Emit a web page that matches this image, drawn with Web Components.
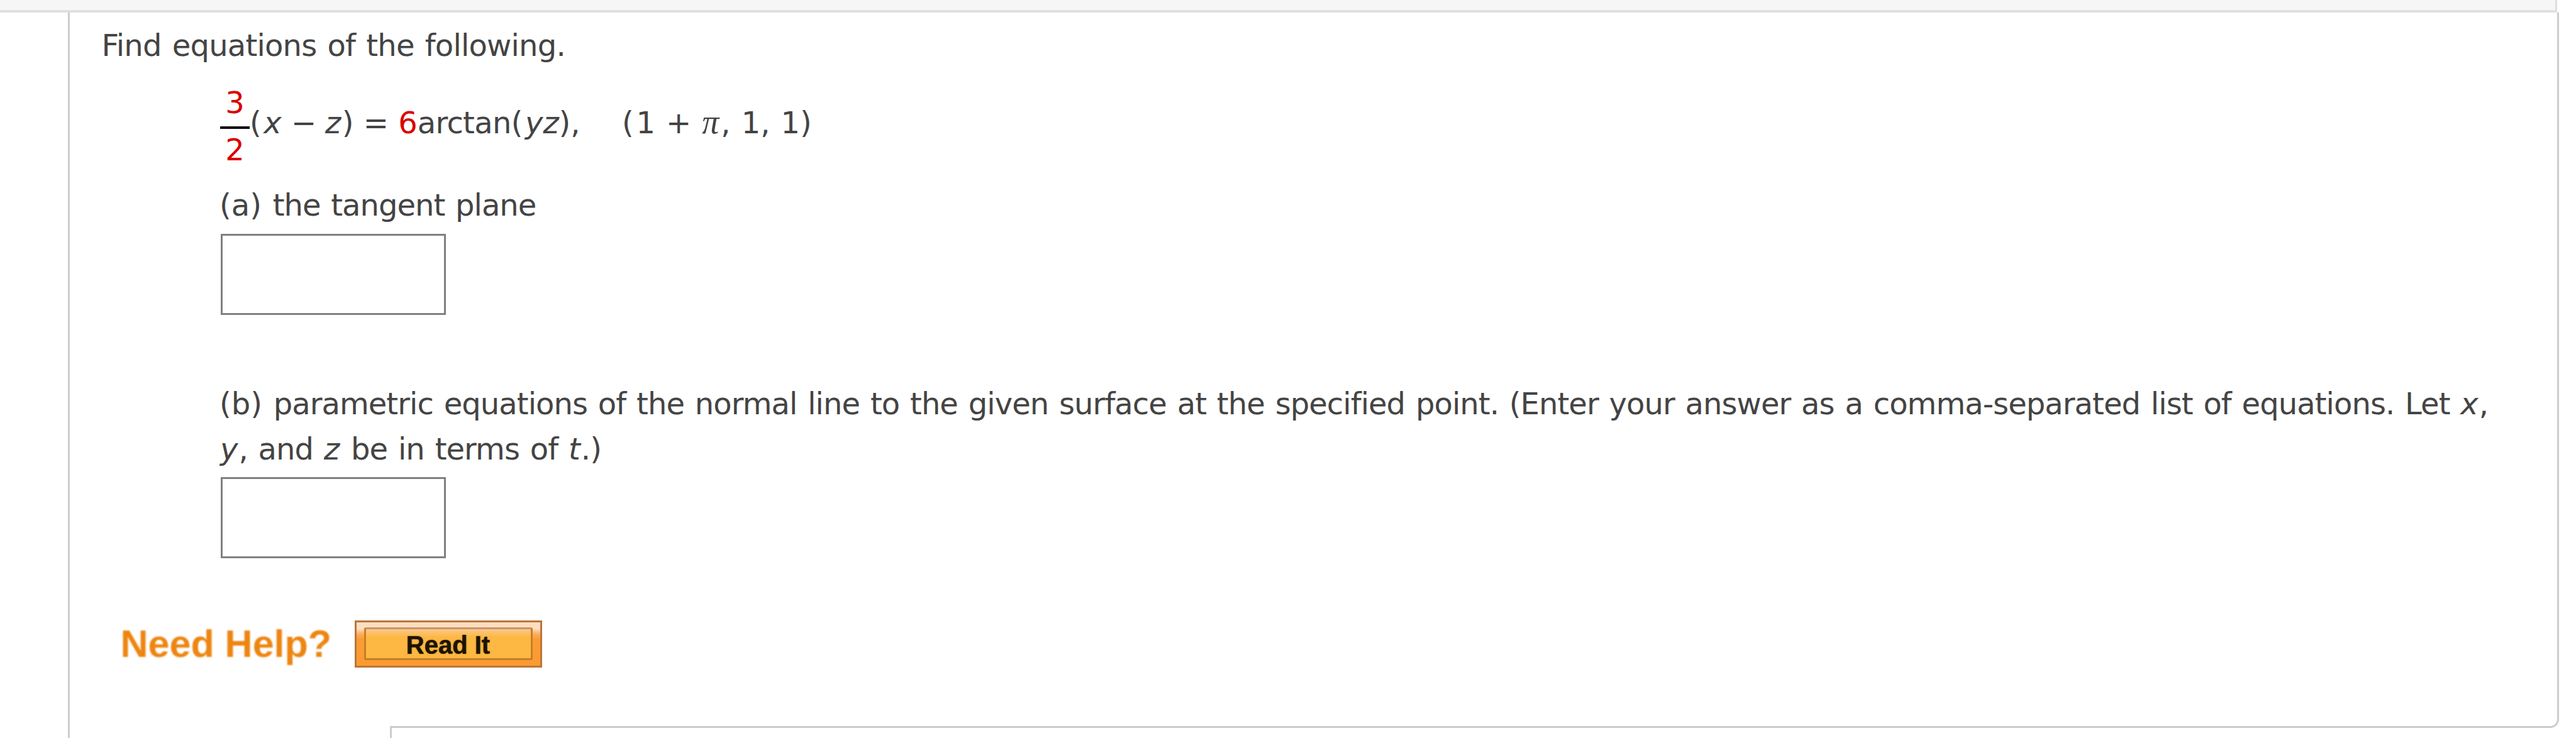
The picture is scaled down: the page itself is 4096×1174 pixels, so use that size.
<!DOCTYPE html>
<html lang="en">
<head>
<meta charset="utf-8">
<title>Tangent planes</title>
<style>
    body{
        margin: 0;
        background: #fff;
        color: #444;
        font: 48px/72px Verdana, "DejaVu Sans", sans-serif;
    }
    i{
        margin-right: 2px;
    }
</style>
</head>
<body>
<question-page>
    <question-card>
        <p slot="intro">Find equations of the following.</p>
        <math-equation slot="body"></math-equation>
        <question-part slot="body" style="margin-top: 28px">
            <part-label>(a)</part-label> the tangent plane
        </question-part>
        <question-part slot="body" style="margin-top: 105px; --track: -.94px">
            <part-label>(b)</part-label> parametric equations of the normal line to the given surface at the specified point. (Enter your answer as a comma-separated list of equations. Let <i>x</i>, <i>y</i>, and <i>z</i> be in terms of <i>t</i>.)
        </question-part>
        <need-help slot="help">
            <help-button>Read It</help-button>
        </need-help>
    </question-card>
</question-page>

<script>
function define(name, html) {
    const template = document.createElement('template');
    template.innerHTML = html;

    customElements.define(name, class extends HTMLElement{
        constructor() {
            super();

            this.attachShadow({ mode: 'open' });
            this.shadowRoot.appendChild(template.content.cloneNode(true));
        }
    });
}

define('question-page', `
    <style>
        :host{
            display: flex;
            flex-direction: column;
            height: 1174px;
            overflow: hidden;
        }
        .header{
            box-sizing: border-box;
            width: 4066px;
            height: 20px;
            background: #f6f6f6;
            border-right: 3px solid #ddd;
            border-bottom: 4px solid #dfdfdf;
        }
        .column{
            flex: 1;
            display: flex;
            flex-direction: column;
            margin-left: 108px;
            border-left: 3px solid #ccc;
        }
        .below{
            display: flex;
            height: 19px;
            margin-top: -3px;
        }
        /* hides the start of the card's bottom line */
        .spacer{
            width: 509px;
            background: #fff;
            position: relative;
        }
        .next{
            border-left: 3px solid #ccc;
        }
    </style>
    <div class="header"></div>
    <div class="column">
        <slot></slot>
        <div class="below">
            <div class="spacer"></div>
            <div class="next"></div>
        </div>
    </div>
`);

define('question-card', `
    <style>
        :host{
            display: block;
            box-sizing: border-box;
            width: 3958px;
            height: 1138px;
            padding: 15.5px 0 0 50.5px;
            border-right: 3px solid #ccc;
            border-bottom: 3px solid #ccc;
            border-bottom-right-radius: 14px;
        }
        ::slotted(p){
            margin: 0;
            letter-spacing: -.79px;
            word-spacing: 2.6px;
        }
        .body{
            margin: 31px 100px 0 188.5px;
        }
        .help{
            margin: 99px 0 0 30px;
        }
    </style>
    <slot name="intro"></slot>
    <div class="body"><slot name="body"></slot></div>
    <div class="help"><slot name="help"></slot></div>
`);

define('math-equation', `
    <style>
        :host{
            display: flex;
            align-items: flex-start;
            height: 123.5px;
        }
        .fraction{
            display: flex;
            flex-direction: column;
            width: 47px;
            line-height: 48px;
            text-align: center;
        }
        .bar{
            height: 4px;
            margin: 14px 0 9.4px;
            background: #000;
        }
        .line{
            margin-top: 20.6px;
            white-space: pre;
        }
        .red{
            color: #d90000;
        }
        .open{
            letter-spacing: 3.6px;
        }
        .fn{
            letter-spacing: -.7px;
        }
        .z{
            margin: 0 1.5px 0 -1.5px;
        }
        .point{
            margin-left: 66.5px;
            word-spacing: 1.8px;
        }
        .pi{
            font: italic 54px/1 "Liberation Serif", serif;
            margin-right: 3px;
        }
    </style>
    <div class="fraction">
        <span class="red">3</span>
        <span class="bar"></span>
        <span class="red">2</span>
    </div>
    <div class="line"><span class="open">(</span><i>x</i> − <i class="z">z</i>) = <span class="red">6</span><span class="fn">arctan</span><span class="open">(</span><i>yz</i>),<span class="point"><span class="open">(</span>1 + <span class="pi">π</span>, 1, 1)</span></div>
`);

define('part-label', `
    <style>
        :host{
            display: inline;
            margin-left: -1px;
            letter-spacing: 0;
        }
    </style>
    <slot></slot>
`);

define('question-part', `
    <style>
        :host{
            display: block;
            line-height: 72.2px;
            letter-spacing: var(--track, -.98px);
            word-spacing: 2.5px;
        }
        input{
            display: block;
            box-sizing: border-box;
            width: 358px;
            height: 129px;
            margin: 9.4px 0 0 1px;
            padding: 0 12px;
            border: 3px solid #808080;
            border-radius: 0;
            background: #fff;
            font: inherit;
        }
    </style>
    <slot></slot>
    <input type="text" aria-label="Answer">
`);

define('need-help', `
    <style>
        :host{
            display: flex;
            align-items: center;
        }
        .label{
            width: 372px;
            padding-bottom: 2px;
            color: #ee8511;
            font: bold 61px/72px Arial, "Liberation Sans", sans-serif;
            filter: blur(.8px);
        }
    </style>
    <span class="label">Need Help?</span>
    <slot></slot>
`);

define('help-button', `
    <style>
        :host{
            display: block;
        }
        button{
            display: block;
            box-sizing: border-box;
            width: 298px;
            height: 75px;
            padding: 8px 12px 9px;
            border: 3px solid #b8763a;
            background: linear-gradient(#fddcbc, #fee0c6 14%, #fbb064 26%, #fa9c34 38%, #fa9a32);
        }
        span{
            display: block;
            box-sizing: border-box;
            height: 52px;
            border: 3px solid #c57f28;
            border-top-color: #c59468;
            border-radius: 3px;
            background: linear-gradient(#fbc88e, #fdb843 26%);
            color: #1c1300;
            font: bold 40px/51px Arial, "Liberation Sans", sans-serif;
            text-align: center;
            text-shadow: 0 0 1.5px #1c1300;
        }
    </style>
    <button><span><slot></slot></span></button>
`);
</script>
</body>
</html>
